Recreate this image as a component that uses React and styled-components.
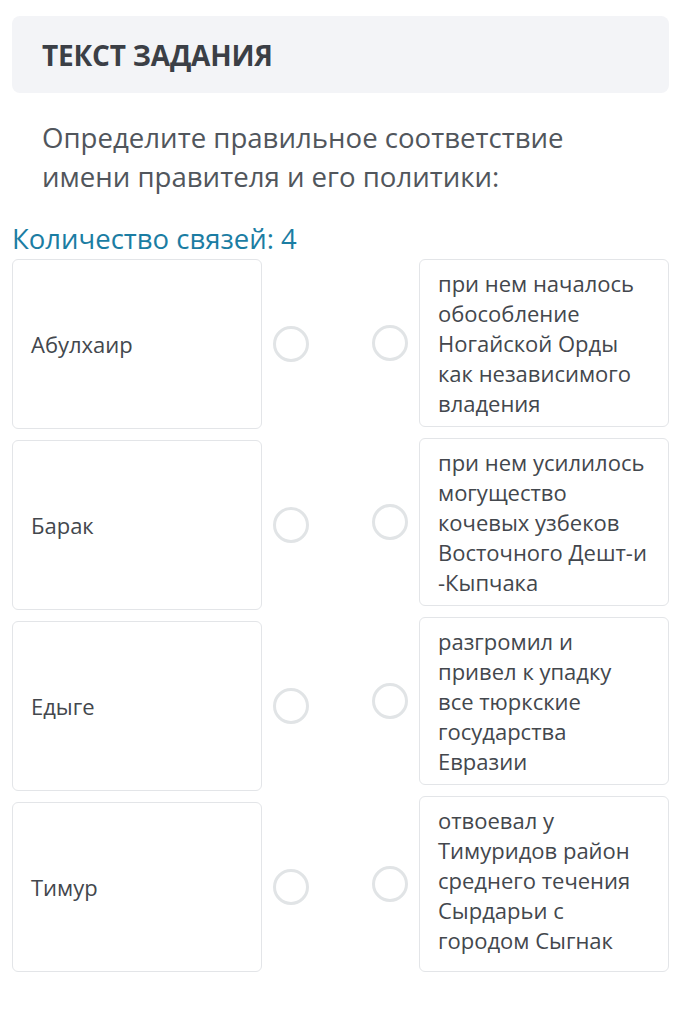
import styled, { createGlobalStyle } from "styled-components";

const GlobalStyle = createGlobalStyle`
  body {
    margin: 0;
    background: #fff;
    font-family: "Open Sans", "Noto Sans", sans-serif;
  }
`;

const leftItems = ["Абулхаир", "Барак", "Едыге", "Тимур"];

const rightItems = [
  "при нем началось обособление Ногайской Орды как независимого владения",
  "при нем усилилось могущество кочевых узбеков Восточного Дешт-и -Кыпчака",
  "разгромил и привел к упадку все тюркские государства Евразии",
  "отвоевал у Тимуридов район среднего течения Сырдарьи с городом Сыгнак",
];

const App = () => {
  return (
    <Page>
      <GlobalStyle />
      <TaskHeader>
        <TaskTitle>ТЕКСТ ЗАДАНИЯ</TaskTitle>
      </TaskHeader>

      <Question>
        Определите правильное соответствие имени правителя и его политики:
      </Question>

      <LinksCount>Количество связей: 4</LinksCount>

      <MatchArea>
        <Column>
          {leftItems.map((name) => (
            <LeftRow key={name}>
              <NameCard>{name}</NameCard>
              <Dot />
            </LeftRow>
          ))}
        </Column>

        <Column>
          {rightItems.map((text, i) => (
            <RightRow key={i}>
              <Dot />
              <AnswerCard $last={i === rightItems.length - 1}>{text}</AnswerCard>
            </RightRow>
          ))}
        </Column>
      </MatchArea>
    </Page>
  );
};

export default App;

const Page = styled.div`
  width: 676px;
  min-height: 1026px;
  padding: 16px 7px 0 12px;
  box-sizing: border-box;
`;

const TaskHeader = styled.div`
  background: #f3f4f7;
  border-radius: 8px;
  height: 77px;
  display: flex;
  align-items: center;
  padding-left: 30px;
`;

const TaskTitle = styled.h1`
  margin: 0;
  font-size: 28px;
  font-weight: 700;
  color: #3b3f46;
  letter-spacing: -0.2px;
`;

const Question = styled.p`
  margin: 25px 0 0;
  padding: 0 30px 0 30px;
  font-size: 27.6px;
  line-height: 39px;
  color: #51565c;
`;

const LinksCount = styled.div`
  margin-top: 24px;
  font-size: 27.5px;
  line-height: 37px;
  color: #1b7da3;
`;

const MatchArea = styled.div`
  display: flex;
  justify-content: space-between;
  margin-top: 2px;
`;

const Column = styled.div`
  display: flex;
  flex-direction: column;
  gap: 11px;
`;

const LeftRow = styled.div`
  display: flex;
  align-items: center;
  gap: 11px;
`;

const RightRow = styled.div`
  display: flex;
  align-items: center;
  gap: 11px;
`;

const NameCard = styled.div`
  width: 250px;
  height: 170px;
  box-sizing: border-box;
  border: 1px solid #e3e5e8;
  border-radius: 6px;
  display: flex;
  align-items: center;
  padding-left: 18px;
  font-size: 22px;
  color: #43474d;
`;

const AnswerCard = styled.div`
  width: 250px;
  min-height: ${(p) => (p.$last ? "176px" : "167px")};
  box-sizing: border-box;
  border: 1px solid #e3e5e8;
  border-radius: 6px;
  padding: 8px 18px 8px 18px;
  font-size: 22px;
  line-height: 30px;
  color: #43474d;
`;

const Dot = styled.span`
  width: 36px;
  height: 36px;
  box-sizing: border-box;
  border: 3px solid #e1e4e6;
  border-radius: 50%;
  flex-shrink: 0;
`;
